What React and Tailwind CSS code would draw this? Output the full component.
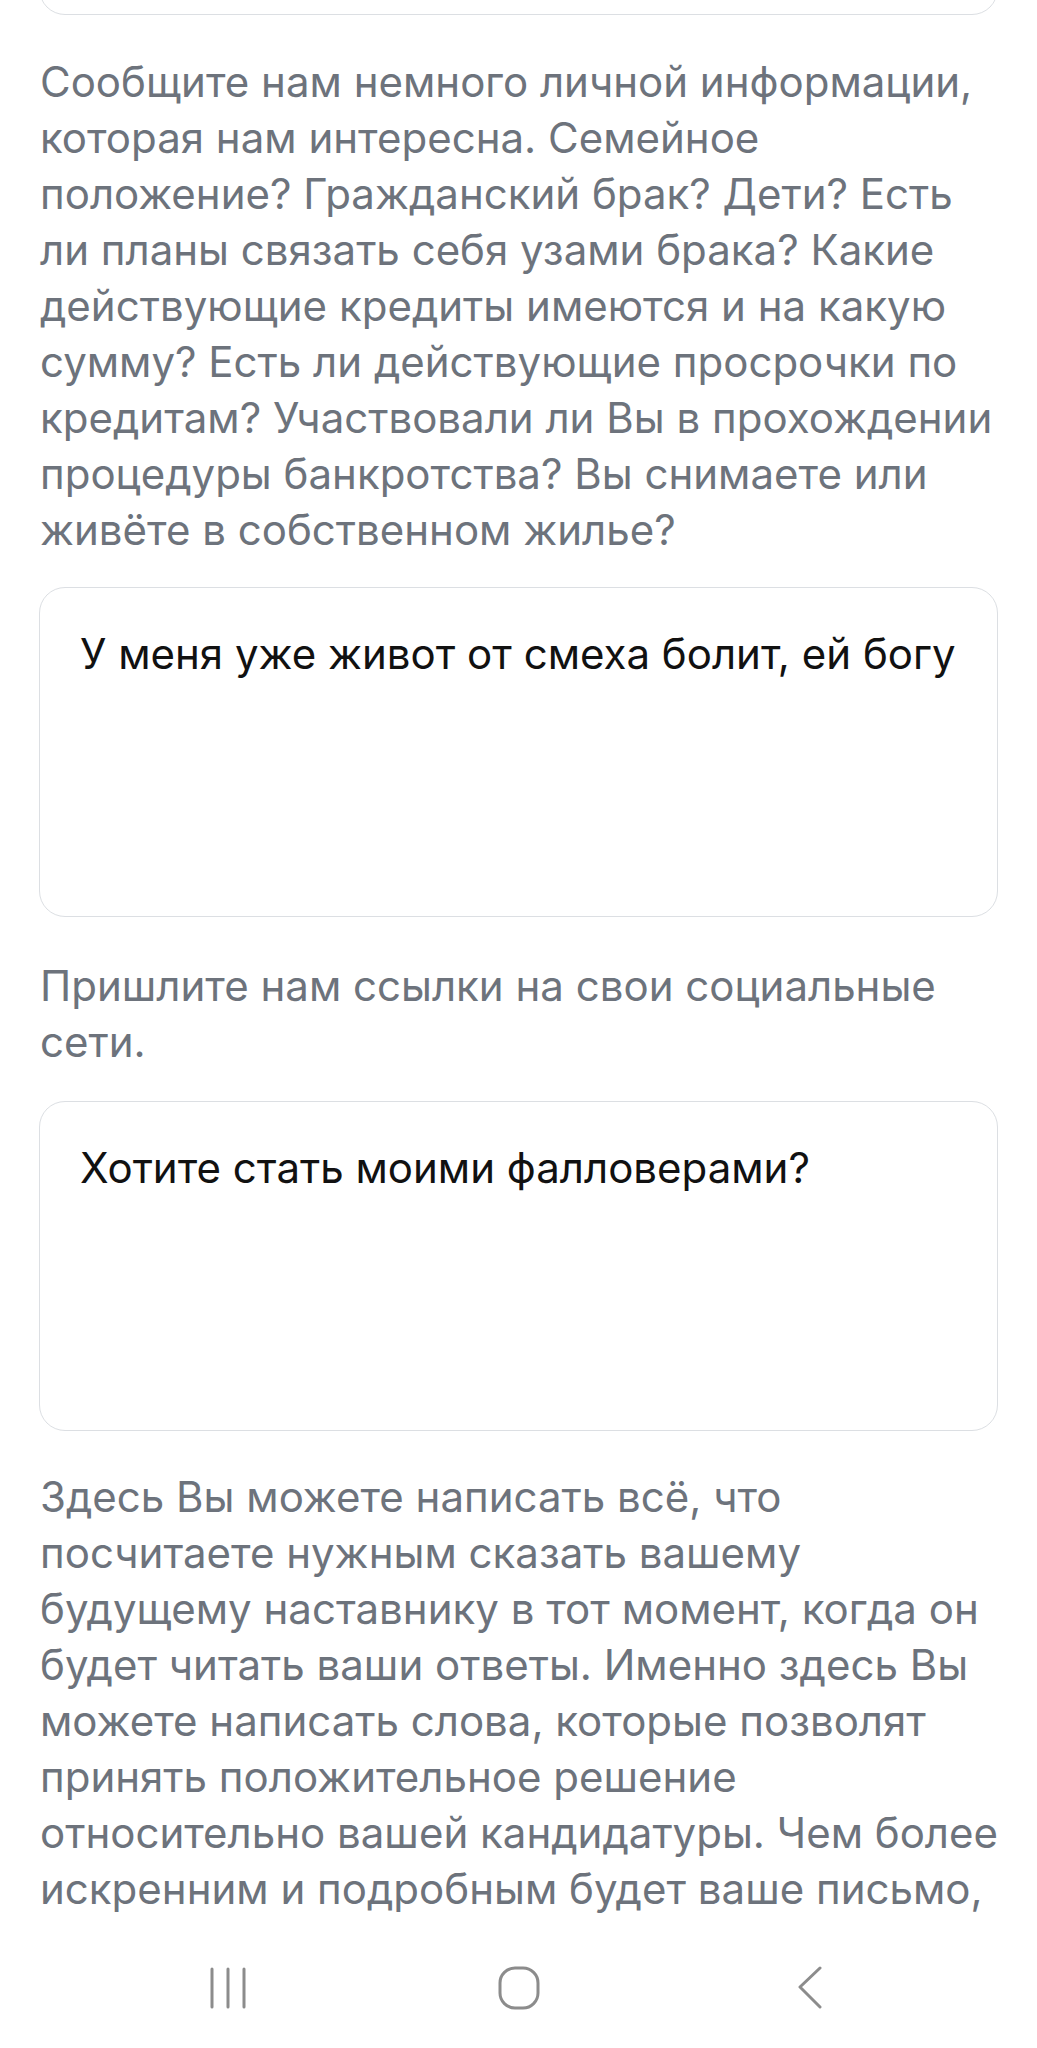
import React from "react";

const P1 = [
  "Сообщите нам немного личной информации,",
  "которая нам интересна. Семейное",
  "положение? Гражданский брак? Дети? Есть",
  "ли планы связать себя узами брака? Какие",
  "действующие кредиты имеются и на какую",
  "сумму? Есть ли действующие просрочки по",
  "кредитам? Участвовали ли Вы в прохождении",
  "процедуры банкротства? Вы снимаете или",
  "живёте в собственном жилье?",
];

const P2 = ["Пришлите нам ссылки на свои социальные", "сети."];

const P3 = [
  "Здесь Вы можете написать всё, что",
  "посчитаете нужным сказать вашему",
  "будущему наставнику в тот момент, когда он",
  "будет читать ваши ответы. Именно здесь Вы",
  "можете написать слова, которые позволят",
  "принять положительное решение",
  "относительно вашей кандидатуры. Чем более",
  "искренним и подробным будет ваше письмо,",
];

function Para({ lines, className = "" }) {
  return (
    <div className={"px-[40px] text-[42px] leading-[56px] text-[#6d737c] " + className}>
      {lines.map((l, i) => (
        <div key={i} className="whitespace-nowrap">
          {l}
        </div>
      ))}
    </div>
  );
}

function Box({ text, className = "" }) {
  return (
    <div
      className={
        "mx-[39px] h-[330px] rounded-[26px] border-[1.5px] border-[#dcdfe3] bg-white px-[40px] pt-[38px] text-[42px] leading-[56px] text-[#111111] " +
        className
      }
    >
      {text}
    </div>
  );
}

export default function App() {
  return (
    <div
      className="flex h-[2048px] w-[1037px] flex-col overflow-hidden bg-white"
      style={{ fontFamily: "Inter, 'Noto Sans', sans-serif" }}
    >
      <div className="flex-1 overflow-hidden">
        <div className="mx-[39px] -mt-[315px] h-[330px] rounded-[26px] border-[1.5px] border-[#dcdfe3]" />
        <Para lines={P1} className="mt-[39px]" />
        <Box text="У меня уже живот от смеха болит, ей богу" className="mt-[29px]" />
        <Para lines={P2} className="mt-[41px]" />
        <Box text="Хотите стать моими фалловерами?" className="mt-[31px]" />
        <Para lines={P3} className="mt-[38px]" />
      </div>
      <div className="flex h-[120px] shrink-0 items-center justify-center bg-white">
        <div className="flex w-[291px] justify-center">
          <svg width="40" height="42" viewBox="0 0 40 42" fill="none" stroke="#8c8c8c" strokeWidth="3" strokeLinecap="round">
            <line x1="4" y1="2" x2="4" y2="40" />
            <line x1="20" y1="2" x2="20" y2="40" />
            <line x1="36" y1="2" x2="36" y2="40" />
          </svg>
        </div>
        <div className="flex w-[291px] justify-center">
          <svg width="42" height="44" viewBox="0 0 42 44" fill="none" stroke="#8c8c8c" strokeWidth="3">
            <rect x="2" y="2" width="38" height="40" rx="15" />
          </svg>
        </div>
        <div className="flex w-[291px] justify-center">
          <svg width="26" height="44" viewBox="0 0 26 44" fill="none" stroke="#8c8c8c" strokeWidth="3" strokeLinecap="round" strokeLinejoin="round">
            <polyline points="23,2 3,21 23,41" />
          </svg>
        </div>
      </div>
    </div>
  );
}
